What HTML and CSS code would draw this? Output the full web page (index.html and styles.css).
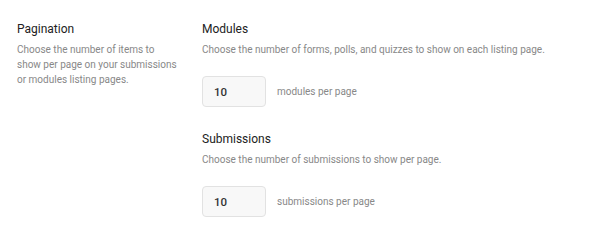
FILE: index.html
```html
<!DOCTYPE html>
<html lang="en">
<head>
    <meta charset="UTF-8">
    <title>Pagination settings</title>
    <link rel="stylesheet" href="styles.css">
</head>
<body>
    <div class="settings-row">
        <div class="settings-label">
            <h3 class="settings-title">Pagination</h3>
            <p class="settings-desc">Choose the number of items to show per page on your submissions or modules listing pages.</p>
        </div>
        <div class="settings-content">
            <div class="field-group">
                <h4 class="field-title">Modules</h4>
                <p class="field-desc">Choose the number of forms, polls, and quizzes to show on each listing page.</p>
                <div class="field-input">
                    <input type="text" class="number-input" value="10">
                    <span class="input-suffix">modules per page</span>
                </div>
            </div>
            <div class="field-group">
                <h4 class="field-title">Submissions</h4>
                <p class="field-desc">Choose the number of submissions to show per page.</p>
                <div class="field-input">
                    <input type="text" class="number-input" value="10">
                    <span class="input-suffix">submissions per page</span>
                </div>
            </div>
        </div>
    </div>
</body>
</html>
```

FILE: styles.css
```css
body {
    margin: 0;
    background-color: #fff;
    font-family: Roboto, "Liberation Sans", Arial, sans-serif;
    color: #333;
}
.settings-row {
    display: flex;
    padding: 22px 17px 0 17px;
}
.settings-label {
    width: 161px;
    flex-shrink: 0;
    margin-right: 24px;
}
.settings-title,
.field-title {
    margin: 0;
    font-size: 12px;
    line-height: 14px;
    font-weight: 400;
    color: #222;
}
.settings-desc,
.field-desc {
    margin: 6px 0 0;
    font-size: 10px;
    line-height: 15px;
    color: #888;
}
.settings-content {
    flex: 1;
}
.field-group {
    margin-bottom: 25px;
}
.field-input {
    display: flex;
    align-items: center;
    margin-top: 19px;
}
.number-input {
    box-sizing: border-box;
    width: 64px;
    height: 31px;
    padding: 0 11px;
    border: 1px solid #e2e2e2;
    border-radius: 4px;
    background-color: #f8f8f8;
    font-family: inherit;
    font-size: 11.5px;
    font-weight: 500;
    color: #333;
}
.input-suffix {
    margin-left: 11px;
    font-size: 10px;
    color: #888;
}
```
